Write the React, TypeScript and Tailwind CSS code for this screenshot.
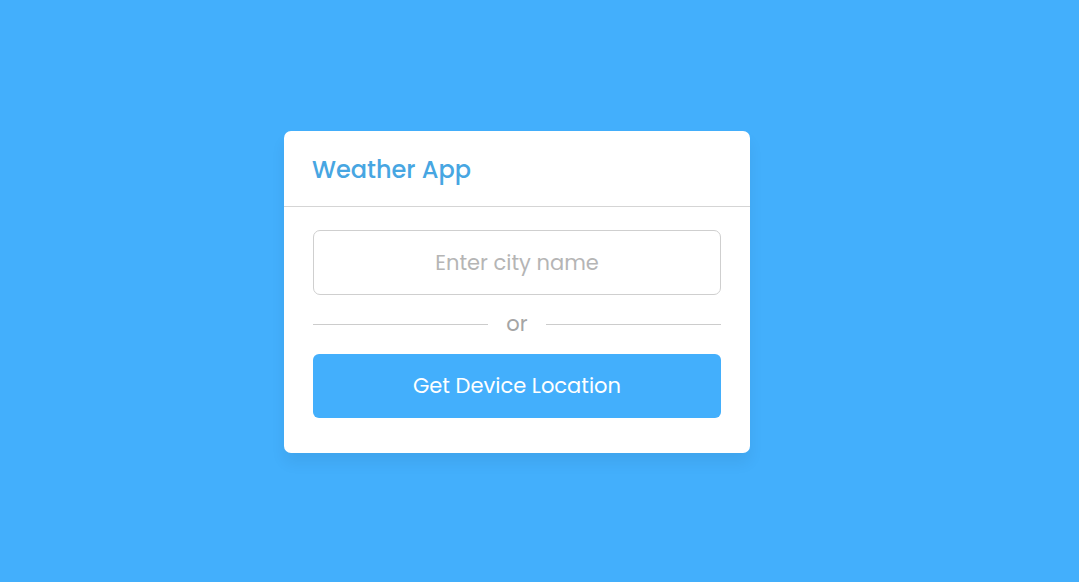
import React from "react";

const font = { fontFamily: "Poppins, 'Open Sans', 'Liberation Sans', sans-serif" };

export default function App() {
  return (
    <div
      className="min-h-screen w-full bg-[#43affc] flex items-center justify-center pr-[45px] pt-[2px]"
      style={font}
    >
      <div className="w-[466px] bg-white rounded-[7px] shadow-[0_10px_15px_rgba(0,0,0,0.06)]">
        <header className="h-[76px] flex items-center px-[28px] border-b border-[#d5d5d5]">
          <h1 className="text-[24px] font-medium text-[#47a6e2] leading-none pt-[2px]">Weather App</h1>
        </header>
        <section className="px-[29px] pt-[23px] pb-[35px] flex flex-col">
          <input
            type="text"
            placeholder="Enter city name"
            className="h-[65px] w-full rounded-[7px] border border-[#cfcfcf] text-center text-[21px] text-[#555] placeholder:text-[#b5b5b5] outline-none"
          />
          <div className="flex items-center gap-[18px] h-[59px]">
            <span className="flex-1 h-px bg-[#cccccc]"></span>
            <span className="text-[21px] text-[#a5a5a5] leading-none pb-[2px]">or</span>
            <span className="flex-1 h-px bg-[#cccccc]"></span>
          </div>
          <button className="h-[64px] w-full rounded-[6px] bg-[#43affc] text-white text-[21px]">
            Get Device Location
          </button>
        </section>
      </div>
    </div>
  );
}
